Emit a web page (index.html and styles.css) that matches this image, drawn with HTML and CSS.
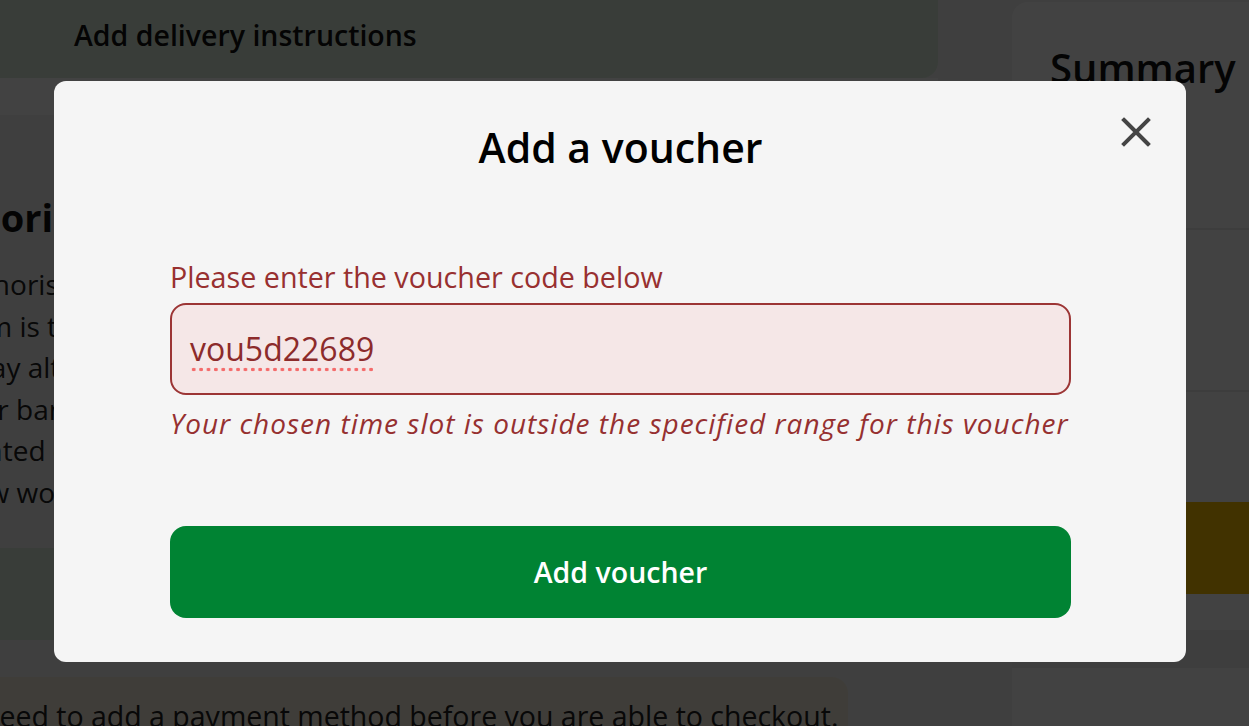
FILE: index.html
```html
<!DOCTYPE html>
<html lang="en">
<head>
    <meta charset="UTF-8">
    <meta name="viewport" content="width=device-width, initial-scale=1.0">
    <title>Checkout - Add a voucher</title>
    <link rel="stylesheet" href="styles.css">
</head>
<body>
    <div class="page">
        <div class="main-col">
            <div class="delivery-card">
                <span>Add delivery instructions</span>
            </div>
            <div class="spacer"></div>
            <section class="auth-section">
                <h2>Authorisation</h2>
                <p>An authorisation hold of £1</p>
                <p>The aim is to verify your card.</p>
                <p>You may alternatively see this</p>
                <p>on your bank statement, which</p>
                <p>is updated once the hold ends</p>
                <p>in a few working days.</p>
            </section>
            <div class="secondary-btn"></div>
            <div class="warning-box">
                <p>You need to add a payment method before you are able to checkout.</p>
            </div>
        </div>
        <aside class="summary-col">
            <div class="summary-card">
                <h2>Summary</h2>
                <div class="summary-row first"></div>
                <div class="summary-row"></div>
                <div class="checkout-btn"></div>
            </div>
        </aside>
    </div>

    <div class="overlay">
        <div class="modal">
            <button class="close-btn" aria-label="Close">
                <svg width="30" height="30" viewBox="0 0 30 30">
                    <path d="M3 3L27 27M27 3L3 27" stroke="#444" stroke-width="4" stroke-linecap="square" fill="none"/>
                </svg>
            </button>
            <h1>Add a voucher</h1>
            <form class="voucher-form">
                <label for="voucherCode">Please enter the voucher code below</label>
                <div class="code-input" id="voucherCode" role="textbox" contenteditable="true"><span class="misspelt">vou5d22689</span></div>
                <p class="error">Your chosen time slot is outside the specified range for this voucher</p>
                <button type="submit" class="add-btn">Add voucher</button>
            </form>
        </div>
    </div>
</body>
</html>
```

FILE: styles.css
```css
body {
    margin: 0;
    font-family: "Open Sans", "Noto Sans", sans-serif;
    background: #f4f4f4;
    color: #222;
    overflow: hidden;
    height: 726px;
}
.page {
    display: grid;
    grid-template-columns: 938px 1fr;
    column-gap: 74px;
}
.main-col {
    display: flex;
    flex-direction: column;
}
.delivery-card {
    height: 78px;
    background: #dcecdc;
    border-radius: 0 0 16px 0;
    display: flex;
    align-items: center;
    padding-left: 74px;
    padding-bottom: 8px;
    box-sizing: border-box;
    font-size: 28.5px;
    font-weight: 600;
    color: #111;
}
.spacer {
    height: 37px;
    background: #fff;
}
.auth-section {
    margin-left: -92px;
    padding-top: 80px;
    height: 433px;
    box-sizing: border-box;
    white-space: nowrap;
}
.auth-section h2 {
    margin: 0 0 25px;
    font-size: 38px;
    line-height: 44px;
    color: #111;
}
.auth-section p {
    margin: 0;
    font-size: 28px;
    line-height: 41.5px;
    color: #222;
}
.secondary-btn {
    height: 92px;
    background: #dcecdc;
    border-radius: 0 16px 16px 0;
}
.warning-box {
    margin-top: 37px;
    width: 848px;
    height: 80px;
    background: #f4ecdc;
    border-radius: 0 16px 0 0;
    box-sizing: border-box;
    padding-top: 20px;
    white-space: nowrap;
}
.warning-box p {
    margin: 0 0 0 -76px;
    font-size: 28.5px;
    color: #222;
}
.summary-col {
    padding-top: 2px;
}
.summary-card {
    background: #fff;
    border-radius: 16px 0 0 0;
    height: 724px;
    padding-left: 38px;
}
.summary-card h2 {
    margin: 0;
    padding-top: 42px;
    font-size: 40px;
    line-height: 48px;
    font-weight: 600;
    color: #111;
}
.summary-row {
    margin-left: -38px;
    height: 160px;
    border-bottom: 2px solid #ebebeb;
}
.summary-row.first {
    height: 136px;
}
.checkout-btn {
    margin: 110px 0 0 -38px;
    height: 92px;
    background: #fcc000;
    border-bottom: 36px solid #fff;
    box-shadow: 0 38px 0 #f0f0f0;
}

/* voucher modal */
.overlay {
    position: fixed;
    inset: 0;
    background: rgba(0, 0, 0, 0.74);
    display: flex;
    align-items: flex-start;
}
.modal {
    position: relative;
    margin: 81px 0 0 54px;
    width: 1132px;
    height: 581px;
    box-sizing: border-box;
    padding: 40px 115px 45px 116px;
    background: #f5f5f5;
    border-radius: 12px;
}
.close-btn {
    position: absolute;
    top: 36px;
    right: 35px;
    width: 30px;
    height: 30px;
    padding: 0;
    border: none;
    background: none;
    cursor: pointer;
}
.close-btn svg {
    display: block;
}
.modal h1 {
    margin: 0;
    text-align: center;
    font-size: 41px;
    line-height: 52px;
    font-weight: 600;
    color: #000;
}
.voucher-form {
    display: flex;
    flex-direction: column;
    margin-top: 87px;
}
.voucher-form label {
    font-size: 28.7px;
    line-height: 34px;
    color: #983030;
    margin-bottom: 9px;
}
.code-input {
    height: 92px;
    box-sizing: border-box;
    padding: 0 18px;
    display: flex;
    align-items: center;
    border: 2px solid #9c3535;
    border-radius: 16px;
    background: #f5e7e7;
    font-size: 32px;
    color: #8c2b2b;
    outline: none;
}
.misspelt {
    padding-bottom: 2px;
    background-image: radial-gradient(circle, #f46b6b 1.6px, transparent 2.1px);
    background-size: 7.4px 5px;
    background-repeat: repeat-x;
    background-position: 0 100%;
}
.error {
    margin: 11px 0 0;
    font-size: 28px;
    line-height: 34px;
    letter-spacing: 1px;
    font-style: italic;
    color: #963030;
}
.add-btn {
    margin-top: 86px;
    height: 92px;
    border: none;
    border-radius: 16px;
    background: #008333;
    color: #fff;
    font-family: inherit;
    font-size: 28.5px;
    font-weight: 600;
    cursor: pointer;
}
```
